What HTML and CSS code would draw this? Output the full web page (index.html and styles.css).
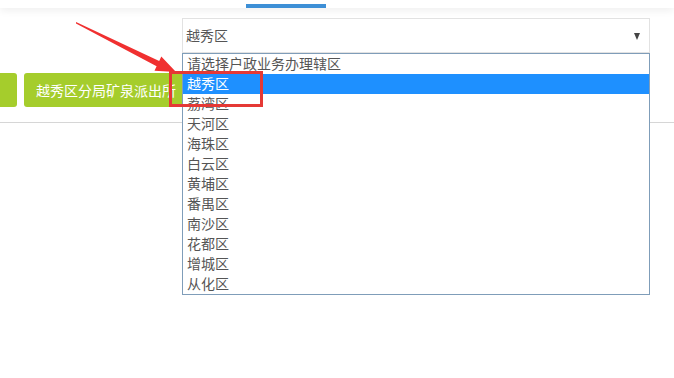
FILE: index.html
```html
<!DOCTYPE html>
<html lang="zh-CN">
<head>
    <meta charset="UTF-8">
    <meta name="viewport" content="width=device-width, initial-scale=1.0">
    <title>户政业务办理辖区</title>
    <link rel="stylesheet" href="styles.css">
</head>
<body>
    <div class="topbar">
        <div class="tab active"></div>
    </div>

    <div class="content">
        <div class="select-row">
            <div class="select-wrap">
                <div class="select-box">
                    <span class="select-value">越秀区</span>
                    <span class="select-arrow"></span>
                </div>
                <ul class="select-list">
                    <li>请选择户政业务办理辖区</li>
                    <li class="selected">越秀区</li>
                    <li>荔湾区</li>
                    <li>天河区</li>
                    <li>海珠区</li>
                    <li>白云区</li>
                    <li>黄埔区</li>
                    <li>番禺区</li>
                    <li>南沙区</li>
                    <li>花都区</li>
                    <li>增城区</li>
                    <li>从化区</li>
                </ul>
            </div>
        </div>

        <div class="btn-row">
            <button class="station-btn first" type="button"></button>
            <button class="station-btn" type="button">越秀区分局矿泉派出所</button>
        </div>

        <div class="divider"></div>
    </div>

    <!-- annotation: red arrow + box -->
    <svg class="mark-arrow" width="110" height="60" viewBox="0 0 110 60">
        <polygon points="0,0 83.2,38.9 85.3,34.4 100,50 78.5,48.8 80.6,44.3 0,1.5" fill="#f03030"/>
    </svg>
    <div class="mark-box"></div>
</body>
</html>
```

FILE: styles.css
```css
:root {
    --green: #a5cd2c;
    --blue: #1e90ff;
    --text-color: #555;
}

body {
    margin: 0;
    padding: 0;
    background: #fff;
    font-family: 'Microsoft YaHei', 'Noto Sans CJK SC', sans-serif;
    font-size: 14px;
    color: var(--text-color);
    overflow: hidden;
    position: relative;
    height: 378px;
}

.topbar {
    height: 8px;
    display: flex;
    align-items: flex-end;
    box-shadow: 0 2px 8px rgba(0,0,0,0.08);
    position: relative;
    z-index: 1;
}

.tab {
    width: 80px;
    height: 4px;
    margin-left: 246px;
}

.tab.active {
    background-color: #3d8fd6;
}

.content {
    padding-top: 10px;
}

.select-row {
    padding-left: 182px;
}

.select-wrap {
    width: 468px;
    position: relative;
}

.select-box {
    height: 33px;
    border: 1px solid #e2e2e2;
    display: flex;
    align-items: center;
    justify-content: space-between;
    padding: 0 9px 0 3px;
    box-sizing: content-box;
}

.select-value {
    line-height: 18px;
    height: 20px;
}

.select-arrow {
    width: 0;
    height: 0;
    border-left: 3.5px solid transparent;
    border-right: 3.5px solid transparent;
    border-top: 7px solid #444;
    margin-top: 1px;
}

.select-list {
    position: absolute;
    top: 35px;
    left: 0;
    width: 466px;
    margin: 0;
    padding: 0;
    list-style: none;
    border: 1px solid #7f9db9;
    background: #fff;
    z-index: 3;
}

.select-list li {
    height: 20px;
    line-height: 18px;
    padding-left: 4px;
    white-space: nowrap;
}

.select-list li.selected {
    background-color: var(--blue);
    color: #fff;
}

.btn-row {
    display: flex;
    gap: 7px;
    margin-top: 20px;
    margin-left: -60px;
}

.station-btn {
    height: 34px;
    padding: 0 12px;
    border: none;
    border-radius: 3px;
    background-color: var(--green);
    color: #fff;
    font-family: inherit;
    font-size: 14px;
    white-space: nowrap;
}

.station-btn.first {
    width: 77px;
}

.divider {
    height: 1px;
    background: #d6d6d6;
    margin-top: 15px;
}

.mark-arrow {
    position: absolute;
    left: 76px;
    top: 22px;
    z-index: 4;
}

.mark-box {
    position: absolute;
    left: 169px;
    top: 71px;
    width: 88px;
    height: 30px;
    border: 3px solid #e53935;
    z-index: 4;
}
```
